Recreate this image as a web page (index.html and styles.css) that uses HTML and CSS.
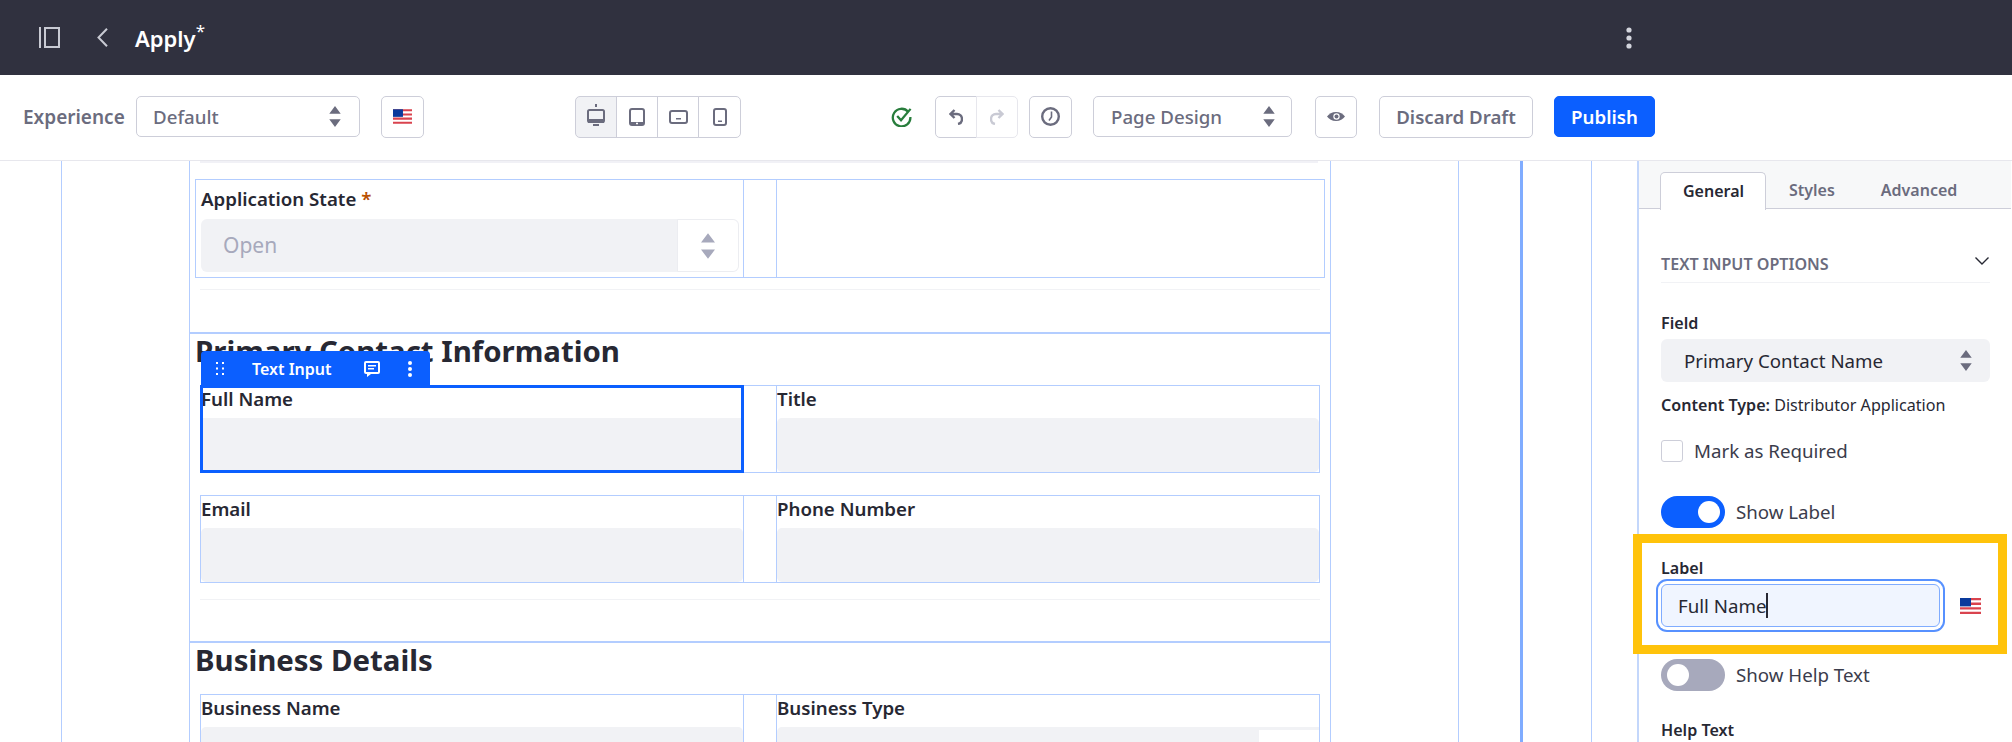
FILE: index.html
```html
<!DOCTYPE html>
<html lang="en-us">
<head>
  <meta charset="utf-8">
  <title>Apply</title>
  <link rel="stylesheet" href="styles.css">
</head>
<body>
  <svg class="sprite" width="0" height="0">
    <symbol id="flag" viewBox="0 0 21 16">
      <rect width="21" height="16" fill="#fff"/>
      <path d="M0 0h21v2.300H0zM0 4.600h21v2.300H0zM0 9.200h21v2.300H0zM0 13.800h21V16H0z" fill="#d9434e"/>
      <rect width="11" height="8.400" fill="#0a3a9c"/>
    </symbol>
    <symbol id="carets" viewBox="0 0 12 22">
      <path d="M6 0l6 8H0zM6 22L0 14h12z"/>
    </symbol>
  </svg>

  <header class="topbar">
    <svg class="topbar-icon panel-icon" viewBox="0 0 21 21"><path d="M1 0v21M6 1h14v19H6z"/></svg>
    <svg class="topbar-icon back-icon" viewBox="0 0 11 19"><path d="M10 .7L1.500 9.500 10 18.300"/></svg>
    <span class="page-title">Apply<sup>*</sup></span>
    <svg class="top-kebab" viewBox="0 0 6 22"><circle cx="3" cy="3" r="2.600"/><circle cx="3" cy="11" r="2.600"/><circle cx="3" cy="19" r="2.600"/></svg>
  </header>

  <div class="toolbar">
    <span class="exp-label">Experience</span>
    <div class="select exp-select">Default<svg class="carets"><use href="#carets"/></svg></div>
    <button class="btn flag-btn"><svg class="flag"><use href="#flag"/></svg></button>

    <div class="btn-group devices">
      <button class="btn active">
        <svg class="ic-desktop" viewBox="0 0 18 22"><path class="fill" d="M8 0h2v3H8zM6 20h6v2H6zM1 15h16v4H1z"/><rect class="line" x="1" y="6" width="16" height="12" rx="1.500"/></svg>
      </button>
      <button class="btn">
        <svg class="ic-tablet" viewBox="0 0 16 18"><rect class="line" x="1" y="1" width="14" height="16" rx="2"/><path class="fill" d="M1 14h14v3H1z"/><path fill="#fff" d="M7 14.800h2v1.500H7z"/></svg>
      </button>
      <button class="btn">
        <svg class="ic-wide" viewBox="0 0 19 14"><rect class="line" x="1" y="1" width="17" height="12" rx="2"/><path class="fill" d="M7 8h5v1.500H7z"/></svg>
      </button>
      <button class="btn">
        <svg class="ic-phone" viewBox="0 0 14 18"><rect class="line" x="1" y="1" width="12" height="16" rx="2"/><path class="fill" d="M5 12.500h4V14H5z"/></svg>
      </button>
    </div>

    <svg class="saved" viewBox="0 0 22 22"><path d="M18 6A9.200 9.200 0 1020.300 11.500"/><path d="M6.500 10.500L10.500 15 20.500 3"/></svg>

    <div class="btn-group history">
      <button class="btn"><svg viewBox="0 0 14 16"><path class="line" d="M5.500 1l-4 4 4 4M2 5h6a5 5 0 015 5c0 2.500-1.500 4.500-4 5"/></svg></button>
      <button class="btn off"><svg viewBox="0 0 14 16"><path class="line" d="M8.500 1l4 4-4 4M12 5H6a5 5 0 00-5 5c0 2.500 1.500 4.500 4 5"/></svg></button>
    </div>
    <button class="btn clock-btn"><svg viewBox="0 0 19 19"><circle class="line" cx="9.500" cy="9.500" r="8.300"/><path class="line thin" d="M10.500 4.500v5.500l-2.500 3.500"/></svg></button>
    <div class="select design-select">Page Design<svg class="carets"><use href="#carets"/></svg></div>
    <button class="btn eye-btn"><svg viewBox="0 0 18 9"><path class="fill" d="M9 0c4 0 7 2 9 4.500C16 7 13 9 9 9S2 7 0 4.500C2 2 5 0 9 0z"/><circle cx="9.500" cy="4.500" r="3.200" fill="#fff"/><circle class="fill" cx="9.500" cy="4.500" r="2"/></svg></button>
    <button class="btn discard">Discard Draft</button>
    <button class="btn publish">Publish</button>
  </div>

  <main class="workspace">
    <div class="guide-outer">
      <div class="guide-inner">
        <div class="top-rule"></div>

        <div class="row state-row">
          <div class="cell state-cell">
            <label class="field-label">Application State <span class="req">*</span></label>
            <div class="state-select">
              <span class="state-value">Open</span>
              <span class="state-arrows"><svg class="carets-off"><use href="#carets"/></svg></span>
            </div>
          </div>
          <div class="cell"></div>
          <div class="cell"></div>
        </div>
        <div class="rule rule-first"></div>

        <section class="form-section first-section">
          <h2>Primary Contact Information</h2>
          <div class="row">
            <div class="cell">
              <label class="field-label">Full Name</label>
              <div class="fake-input flat"></div>
              <div class="selected-box"></div>
              <div class="chip">
                <svg class="chip-drag" viewBox="0 0 8 13"><path d="M0 0h2v2H0zM6 0h2v2H6zM0 5.500h2v2H0zM6 5.500h2v2H6zM0 11h2v2H0zM6 11h2v2H6z"/></svg>
                <span class="chip-name">Text Input</span>
                <svg class="chip-comment" viewBox="0 0 16 16"><path d="M2 0h12a2 2 0 012 2v9a2 2 0 01-2 2H7l-4 3v-3H2a2 2 0 01-2-2V2a2 2 0 012-2zm0 2v9h12V2zM4 4h8v1.500H4zM4 7h6v1.500H4z"/></svg>
                <svg class="chip-kebab" viewBox="0 0 4 16"><circle cx="2" cy="2" r="2"/><circle cx="2" cy="8" r="2"/><circle cx="2" cy="14" r="2"/></svg>
              </div>
            </div>
            <div class="cell"></div>
            <div class="cell">
              <label class="field-label">Title</label>
              <div class="fake-input"></div>
            </div>
          </div>
          <div class="row next-row">
            <div class="cell">
              <label class="field-label">Email</label>
              <div class="fake-input"></div>
            </div>
            <div class="cell"></div>
            <div class="cell">
              <label class="field-label">Phone Number</label>
              <div class="fake-input"></div>
            </div>
          </div>
          <div class="rule rule-section"></div>
        </section>

        <section class="form-section">
          <h2>Business Details</h2>
          <div class="row">
            <div class="cell">
              <label class="field-label">Business Name</label>
              <div class="fake-input"></div>
            </div>
            <div class="cell"></div>
            <div class="cell">
              <label class="field-label">Business Type</label>
              <div class="fake-input with-arrows"><span class="fake-arrows"></span></div>
            </div>
          </div>
        </section>
      </div>
    </div>

    <div class="rail rail-thick"></div>
    <div class="rail rail-thin"></div>

    <aside class="sidebar">
      <div class="tabs">
        <span class="tab current">General</span>
        <span class="tab">Styles</span>
        <span class="tab">Advanced</span>
      </div>
      <div class="panel">
        <div class="panel-head">
          <span>TEXT INPUT OPTIONS</span>
          <svg viewBox="0 0 14 8"><path d="M.5.500L7 7 13.500.500"/></svg>
        </div>

        <label class="side-label field-top">Field</label>
        <div class="side-select">Primary Contact Name<svg class="carets"><use href="#carets"/></svg></div>
        <p class="content-type"><b>Content Type:</b> Distributor Application</p>

        <div class="check-line"><span class="checkbox"></span>Mark as Required</div>
        <div class="toggle-line label-toggle"><span class="toggle on"></span>Show Label</div>

        <label class="side-label label-top">Label</label>
        <div class="label-line">
          <div class="text-box">Full Name<span class="text-caret"></span></div>
          <svg class="flag side-flag"><use href="#flag"/></svg>
        </div>

        <div class="toggle-line help-toggle"><span class="toggle"></span>Show Help Text</div>
        <label class="side-label help-top">Help Text</label>

        <div class="callout"></div>
      </div>
    </aside>
  </main>
</body>
</html>
```

FILE: styles.css
```css
* {
  box-sizing: border-box;
}

html, body {
  margin: 0;
  height: 742px;
  overflow: hidden;
}

body {
  font-family: "Noto Sans", sans-serif;
  color: #272833;
  background: #fff;
}

.sprite {
  display: block;
  height: 0;
}

/* top dark bar */
.topbar {
  display: flex;
  align-items: center;
  height: 75px;
  padding-left: 39px;
  background: #30313f;
}

.topbar-icon {
  fill: none;
  stroke: #c8cad3;
  stroke-width: 2;
}

.panel-icon {
  width: 21px;
  height: 21px;
}

.back-icon {
  width: 11px;
  height: 19px;
  margin-left: 37px;
}

.page-title {
  width: 200px;
  margin-left: 27px;
  font-size: 22px;
  font-weight: 600;
  color: #fff;
}

.page-title sup {
  font-size: 17px;
  font-weight: 400;
  line-height: 0;
  vertical-align: 10px;
}

.top-kebab {
  width: 6px;
  height: 22px;
  margin-left: 1291px;
  fill: #d3d5dd;
}

/* toolbar */
.toolbar {
  display: flex;
  align-items: center;
  height: 86px;
  padding: 0 0 2px 23px;
  border-bottom: 1px solid #e7e7ed;
  background: #fff;
}

.exp-label {
  width: 113px;
  font-size: 19px;
  font-weight: 600;
  color: #6b6c7e;
}

.select {
  display: flex;
  align-items: center;
  justify-content: space-between;
  height: 41px;
  border: 1px solid #cdced9;
  border-radius: 5px;
  font-size: 18.700px;
  font-weight: 500;
  color: #6b6c7e;
}

.carets {
  width: 12px;
  height: 21px;
  fill: #6b6c7e;
}

.exp-select {
  width: 224px;
  padding: 0 18px 0 16px;
}

.btn {
  display: flex;
  align-items: center;
  justify-content: center;
  height: 42px;
  padding: 0;
  border: 1px solid #cdced9;
  border-radius: 5px;
  background: #fff;
  font-family: inherit;
  font-size: 18.700px;
  font-weight: 600;
  color: #6b6c7e;
}

.flag {
  display: block;
  width: 19px;
  height: 15px;
}

.flag-btn {
  width: 43px;
  margin-left: 21px;
}

.btn-group {
  display: flex;
}

.btn-group .btn {
  margin-left: -1px;
  border-radius: 0;
}

.btn-group .btn:first-child {
  margin-left: 0;
  border-radius: 5px 0 0 5px;
}

.btn-group .btn:last-child {
  border-radius: 0 5px 5px 0;
}

.devices {
  margin-left: 151px;
}

.devices .btn {
  width: 42px;
}

.devices .btn:last-child {
  width: 43px;
}

.devices .btn.active {
  background: #f1f2f5;
}

.ic-desktop {
  width: 18px;
  height: 22px;
  margin-top: -3px;
}

.ic-tablet {
  width: 16px;
  height: 18px;
}

.ic-wide {
  width: 19px;
  height: 14px;
}

.ic-phone {
  width: 14px;
  height: 18px;
}

.fill {
  fill: #6b6c7e;
}

.line {
  fill: none;
  stroke: #6b6c7e;
  stroke-width: 2;
}

.saved {
  width: 21px;
  height: 21px;
  margin-left: 150px;
  fill: none;
  stroke: #287d3c;
  stroke-width: 2.400;
}

.history {
  margin-left: 23px;
}

.history .btn {
  width: 42px;
}

.history svg {
  width: 14px;
  height: 16px;
}

.history .line {
  stroke-width: 2.400;
}

.history .btn.off {
  border-color: #e7e7ed;
}

.history .btn.off .line {
  stroke: #c9cad4;
}

.clock-btn {
  width: 43px;
  margin-left: 11px;
}

.clock-btn svg {
  width: 19px;
  height: 19px;
}

.clock-btn .line {
  stroke-width: 2.400;
}

.clock-btn .thin {
  stroke-width: 1.600;
}

.design-select {
  width: 199px;
  margin-left: 21px;
  padding: 0 16px 0 17px;
}

.eye-btn {
  width: 42px;
  margin-left: 23px;
}

.eye-btn svg {
  width: 18px;
  height: 9px;
}

.discard {
  width: 154px;
  margin-left: 22px;
}

.publish {
  width: 101px;
  height: 41px;
  margin-left: 21px;
  border-color: #0b5fff;
  background: #0b5fff;
  color: #fff;
}

/* page canvas */
.workspace {
  display: flex;
  height: 581px;
  overflow: hidden;
}

.guide-outer {
  flex: none;
  width: 1398px;
  margin-left: 61px;
  padding-left: 127px;
  border-left: 1px solid #b3cdff;
  border-right: 1px solid #b3cdff;
}

.guide-inner {
  width: 1142px;
  border-left: 1px solid #b3cdff;
  border-right: 1px solid #b3cdff;
}

.top-rule {
  height: 2px;
  margin: 0 12px 0 10px;
  background: #f1f1f6;
}

.row {
  display: grid;
  grid-template-columns: 543px 33px 1fr;
  height: 88px;
  margin: 15px 10px 0 10px;
  border: 1px solid #b3cdff;
}

.state-row {
  grid-template-columns: 548px 33px 1fr;
  height: 99px;
  margin: 16px 5px 0 5px;
}

.cell {
  position: relative;
  display: flex;
  flex-direction: column;
  min-width: 0;
  border-right: 1px solid #b3cdff;
}

.cell:last-child {
  border-right: 0;
}

.field-label {
  height: 20px;
  margin: 3px 0 9px 0;
  font-size: 18.700px;
  font-weight: 600;
  line-height: 20px;
}

.req {
  color: #b95000;
}

.state-cell {
  padding: 0 4px 0 5px;
}

.state-select {
  display: flex;
  height: 53px;
  margin-top: 10px;
  border-radius: 6px;
  background: #f1f2f5;
  overflow: hidden;
}

.state-cell .field-label {
  margin: 9px 0 0 0;
}

.state-value {
  flex: 1;
  padding-left: 22px;
  font-size: 21px;
  line-height: 53px;
  color: #a7a9bc;
}

.state-arrows {
  display: flex;
  align-items: center;
  justify-content: center;
  width: 62px;
  border: 1px solid #ecedf1;
  border-radius: 0 6px 6px 0;
  background: #fff;
}

.carets-off {
  width: 14px;
  height: 26px;
  fill: #a7a9bc;
}

.fake-input {
  flex: 1;
  border-radius: 5px;
  background: #f1f2f5;
}

.fake-input.flat {
  border-radius: 0;
}

.with-arrows {
  display: flex;
  justify-content: flex-end;
  border-radius: 5px 0 0 0;
}

.fake-arrows {
  width: 61px;
  margin-top: 2px;
  border-top: 1px solid #f1f2f5;
  border-left: 1px solid #f1f2f5;
  background: #fff;
}

.rule {
  height: 1px;
  background: #f1f2f5;
  margin-right: 10px;
  margin-left: 10px;
}

.rule-first {
  margin-top: 11px;
}

.rule-section {
  margin-top: 16px;
}

.form-section {
  margin-top: 41px;
  border-top: 2px solid #b3cdff;
}

.first-section {
  margin-top: 42px;
}

.form-section h2 {
  height: 36px;
  margin: 0;
  padding-left: 5px;
  font-size: 29.400px;
  font-weight: 700;
  line-height: 35px;
}

.next-row {
  margin-top: 22px;
}

.selected-box {
  position: absolute;
  inset: -1px -1px -1px -1px;
  border: 3px solid #0b5fff;
}

.chip {
  position: absolute;
  left: 0;
  top: -35px;
  display: flex;
  align-items: center;
  width: 229px;
  height: 37px;
  padding-bottom: 2px;
  border-radius: 4px 4px 0 0;
  background: #0b5fff;
  color: #fff;
  font-size: 16px;
  font-weight: 600;
}

.chip svg {
  fill: #fff;
}

.chip-drag {
  width: 8px;
  height: 13px;
  margin-left: 15px;
}

.chip-name {
  margin-left: 28px;
}

.chip-comment {
  width: 16px;
  height: 16px;
  margin-left: 32px;
}

.chip-kebab {
  width: 4px;
  height: 16px;
  margin-left: 28px;
}

/* rails right of the canvas */
.rail {
  flex: none;
}

.rail-thick {
  width: 3px;
  margin-left: 61px;
  background: #80acff;
}

.rail-thin {
  width: 1px;
  margin-left: 68px;
  background: #b3cdff;
}

/* right sidebar */
.sidebar {
  flex: none;
  width: 374px;
  margin-left: 45px;
  border-left: 2px solid #c4d7fb;
}

.tabs {
  display: flex;
  height: 48px;
  padding: 11px 0 0 21px;
  border-bottom: 1px solid #cdced9;
  background: #f7f8f9;
  font-size: 16px;
  font-weight: 600;
  color: #6b6c7e;
}

.tab {
  padding: 0 23px;
  line-height: 36px;
}

.current {
  width: 106px;
  height: 38px;
  border: 1px solid #cdced9;
  border-bottom: 0;
  border-radius: 5px 5px 0 0;
  background: #fff;
  color: #272833;
  line-height: 36px;
  padding: 0 22px;
}

.panel {
  position: relative;
  height: 533px;
  padding: 0 21px 0 22px;
}

.panel-head {
  display: flex;
  align-items: center;
  justify-content: space-between;
  height: 74px;
  padding-top: 37px;
  border-bottom: 1px solid #f1f2f5;
  font-size: 16.100px;
  font-weight: 600;
  color: #6b6c7e;
}

.panel-head svg {
  width: 14px;
  height: 8px;
  margin: -6px 1px 0 0;
  fill: none;
  stroke: #272833;
  stroke-width: 1.400;
}

.side-label {
  display: block;
  height: 20px;
  font-size: 16.100px;
  font-weight: 600;
  line-height: 20px;
}

.field-top {
  margin-top: 30px;
}

.side-select {
  display: flex;
  align-items: center;
  justify-content: space-between;
  height: 43px;
  margin-top: 6px;
  padding: 0 18px 0 23px;
  border-radius: 6px;
  background: #f1f2f5;
  font-size: 18.700px;
}

.content-type {
  margin: 13px 0 0;
  font-size: 16.100px;
  line-height: 20px;
}

.content-type b {
  font-weight: 600;
}

.check-line,
.toggle-line {
  display: flex;
  align-items: center;
  padding-bottom: 2px;
  font-size: 18.700px;
  color: #3b3c4b;
}

.check-line {
  height: 22px;
  margin-top: 25px;
}

.checkbox {
  width: 22px;
  height: 22px;
  margin-right: 11px;
  margin-bottom: -2px;
  border: 1px solid #cdced9;
  border-radius: 3px;
}

.toggle-line {
  height: 32px;
}

.label-toggle {
  margin-top: 34px;
}

.toggle {
  position: relative;
  width: 64px;
  height: 32px;
  margin-right: 11px;
  margin-bottom: -2px;
  border-radius: 16px;
  background: #a7a9bc;
}

.toggle::after {
  content: "";
  position: absolute;
  top: 5px;
  left: 6px;
  width: 22px;
  height: 22px;
  border-radius: 50%;
  background: #fff;
}

.toggle.on {
  background: #0b5fff;
}

.toggle.on::after {
  left: auto;
  right: 5px;
}

.label-top {
  margin-top: 30px;
}

.label-line {
  display: flex;
  align-items: center;
  margin-top: 6px;
}

.text-box {
  display: flex;
  align-items: center;
  width: 279px;
  height: 43px;
  padding-left: 16px;
  border: 1px solid #80acff;
  border-radius: 6px;
  background: #f0f5ff;
  box-shadow: 0 0 0 3px #fff, 0 0 0 5px #5791ff;
  font-size: 18.700px;
}

.text-caret {
  width: 2px;
  height: 25px;
  background: #272833;
}

.side-flag {
  width: 21px;
  height: 16px;
  margin-left: 20px;
}

.help-toggle {
  margin-top: 32px;
}

.help-top {
  margin-top: 29px;
}

/* yellow highlight drawn on top of the panel */
.callout {
  position: absolute;
  left: -6px;
  top: 325px;
  width: 374px;
  height: 120px;
  border: 9px solid #ffc30b;
}
```
